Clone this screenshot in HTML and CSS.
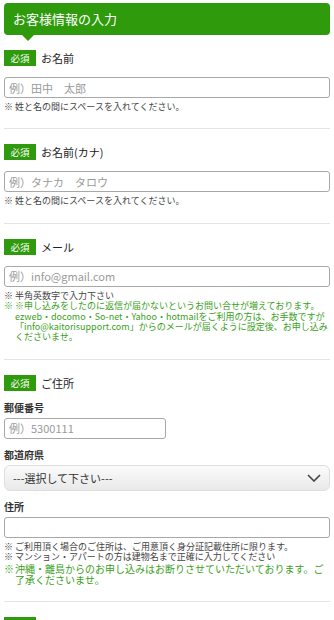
FILE: index.html
```html
<!DOCTYPE html>
<html lang="ja">
<head>
  <meta charset="UTF-8">
  <meta name="viewport" content="width=device-width, initial-scale=1.0">
  <title>お客様情報の入力</title>
  <link rel="stylesheet" href="styles.css">
</head>
<body>
  <div class="container">
    <div class="title">お客様情報の入力</div>

    <div class="field">
      <div class="field-head">
        <span class="badge">必須</span>
        <span class="field-name">お名前</span>
      </div>
      <input class="text-input" type="text" placeholder="例）田中　太郎">
      <p class="note"><span class="mark">※</span>姓と名の間にスペースを入れてください。</p>
    </div>

    <div class="field">
      <div class="field-head">
        <span class="badge">必須</span>
        <span class="field-name">お名前(カナ)</span>
      </div>
      <input class="text-input" type="text" placeholder="例）タナカ　タロウ">
      <p class="note"><span class="mark">※</span>姓と名の間にスペースを入れてください。</p>
    </div>

    <div class="field">
      <div class="field-head">
        <span class="badge">必須</span>
        <span class="field-name">メール</span>
      </div>
      <input class="text-input" type="text" placeholder="例）info@gmail.com">
      <p class="note"><span class="mark">※</span>半角英数字で入力下さい</p>
      <p class="note green"><span class="mark">※</span>※申し込みをしたのに返信が届かないというお問い合せが増えております。ezweb・docomo・So-net・Yahoo・hotmailをご利用の方は、お手数ですが「info@kaitorisupport.com」からのメールが届くように設定後、お申し込みくださいませ。</p>
    </div>

    <div class="field">
      <div class="field-head">
        <span class="badge">必須</span>
        <span class="field-name">ご住所</span>
      </div>
      <div class="sub-label">郵便番号</div>
      <input class="text-input short" type="text" placeholder="例）5300111">
      <div class="sub-label">都道府県</div>
      <div class="select-wrap">
        <select class="select">
          <option>---選択して下さい---</option>
        </select>
        <svg class="chevron" width="14" height="8" viewBox="0 0 14 8">
          <path d="M1 1 L7 7 L13 1" fill="none" stroke="#444" stroke-width="1.6"/>
        </svg>
      </div>
      <div class="sub-label">住所</div>
      <input class="text-input" type="text">
      <p class="note"><span class="mark">※</span>ご利用頂く場合のご住所は、ご用意頂く身分証記載住所に限ります。</p>
      <p class="note"><span class="mark">※</span>マンション・アパートの方は建物名まで正確に入力してください</p>
      <p class="note green big"><span class="mark">※</span>沖縄・離島からのお申し込みはお断りさせていただいております。ご了承くださいませ。</p>
    </div>

    <div class="field">
      <div class="field-head">
        <span class="badge">必須</span>
        <span class="field-name">お電話番号</span>
      </div>
      <input class="text-input" type="text" placeholder="例）09012345678">
    </div>
  </div>
</body>
</html>
```

FILE: styles.css
```css
body {
  margin: 0;
  font-family: "Noto Sans CJK JP", "Noto Sans", sans-serif;
  color: #333;
  background-color: #fff;
}

.container {
  padding: 3px 4px 0;
}

.title {
  position: relative;
  height: 32px;
  line-height: 32px;
  padding-left: 9px;
  background-color: #2e9a0c;
  color: #fff;
  font-size: 13px;
  border-radius: 4px;
}

.title::after {
  content: "";
  position: absolute;
  left: 18px;
  top: 32px;
  border-left: 6px solid transparent;
  border-right: 6px solid transparent;
  border-top: 6px solid #2e9a0c;
}

.field {
  padding: 15px 0 16px;
  border-bottom: 1px solid #e4e4e4;
}

.field-head {
  display: flex;
  align-items: center;
  gap: 5px;
  height: 16px;
  margin-bottom: 11px;
}

.badge {
  width: 32px;
  height: 16px;
  line-height: 16px;
  text-align: center;
  background-color: #2e9a0c;
  color: #fff;
  font-size: 9.5px;
}

.field-name {
  font-size: 11px;
  color: #222;
}

.text-input {
  display: block;
  width: 100%;
  height: 21px;
  box-sizing: border-box;
  margin: 0;
  padding: 0 4px;
  border: 1px solid #a8a8a8;
  border-radius: 3px;
  font-family: "Noto Sans CJK JP", "Noto Sans", sans-serif;
  font-size: 11px;
  color: #333;
}

.text-input::placeholder {
  color: #9a9a9a;
}

.text-input.short {
  width: 162px;
}

.note {
  margin: 4px 0 0;
  padding-left: 11px;
  text-indent: -11px;
  font-size: 9px;
  line-height: 10.4px;
  color: #444;
}

.note + .note {
  margin-top: 0;
}

.mark {
  display: inline-block;
  width: 11px;
  text-indent: 0;
}

.note.green {
  color: #3a9f1c;
}

.note.big {
  font-size: 10px;
  line-height: 11px;
}

.sub-label {
  font-size: 10px;
  font-weight: bold;
  line-height: 12px;
  color: #333;
  margin: 10px 0 4px;
}

.field-head + .sub-label {
  margin-top: 0;
}

.select-wrap {
  position: relative;
}

.select {
  display: block;
  width: 100%;
  height: 26px;
  margin: 0;
  padding: 0 8px;
  -webkit-appearance: none;
  appearance: none;
  border: 1px solid #dedede;
  border-radius: 6px;
  background: linear-gradient(#fbfbfb, #e9e9e9);
  font-family: "Noto Sans CJK JP", "Noto Sans", sans-serif;
  font-size: 11px;
  color: #333;
}

.chevron {
  position: absolute;
  right: 9px;
  top: 9px;
  pointer-events: none;
}
```
